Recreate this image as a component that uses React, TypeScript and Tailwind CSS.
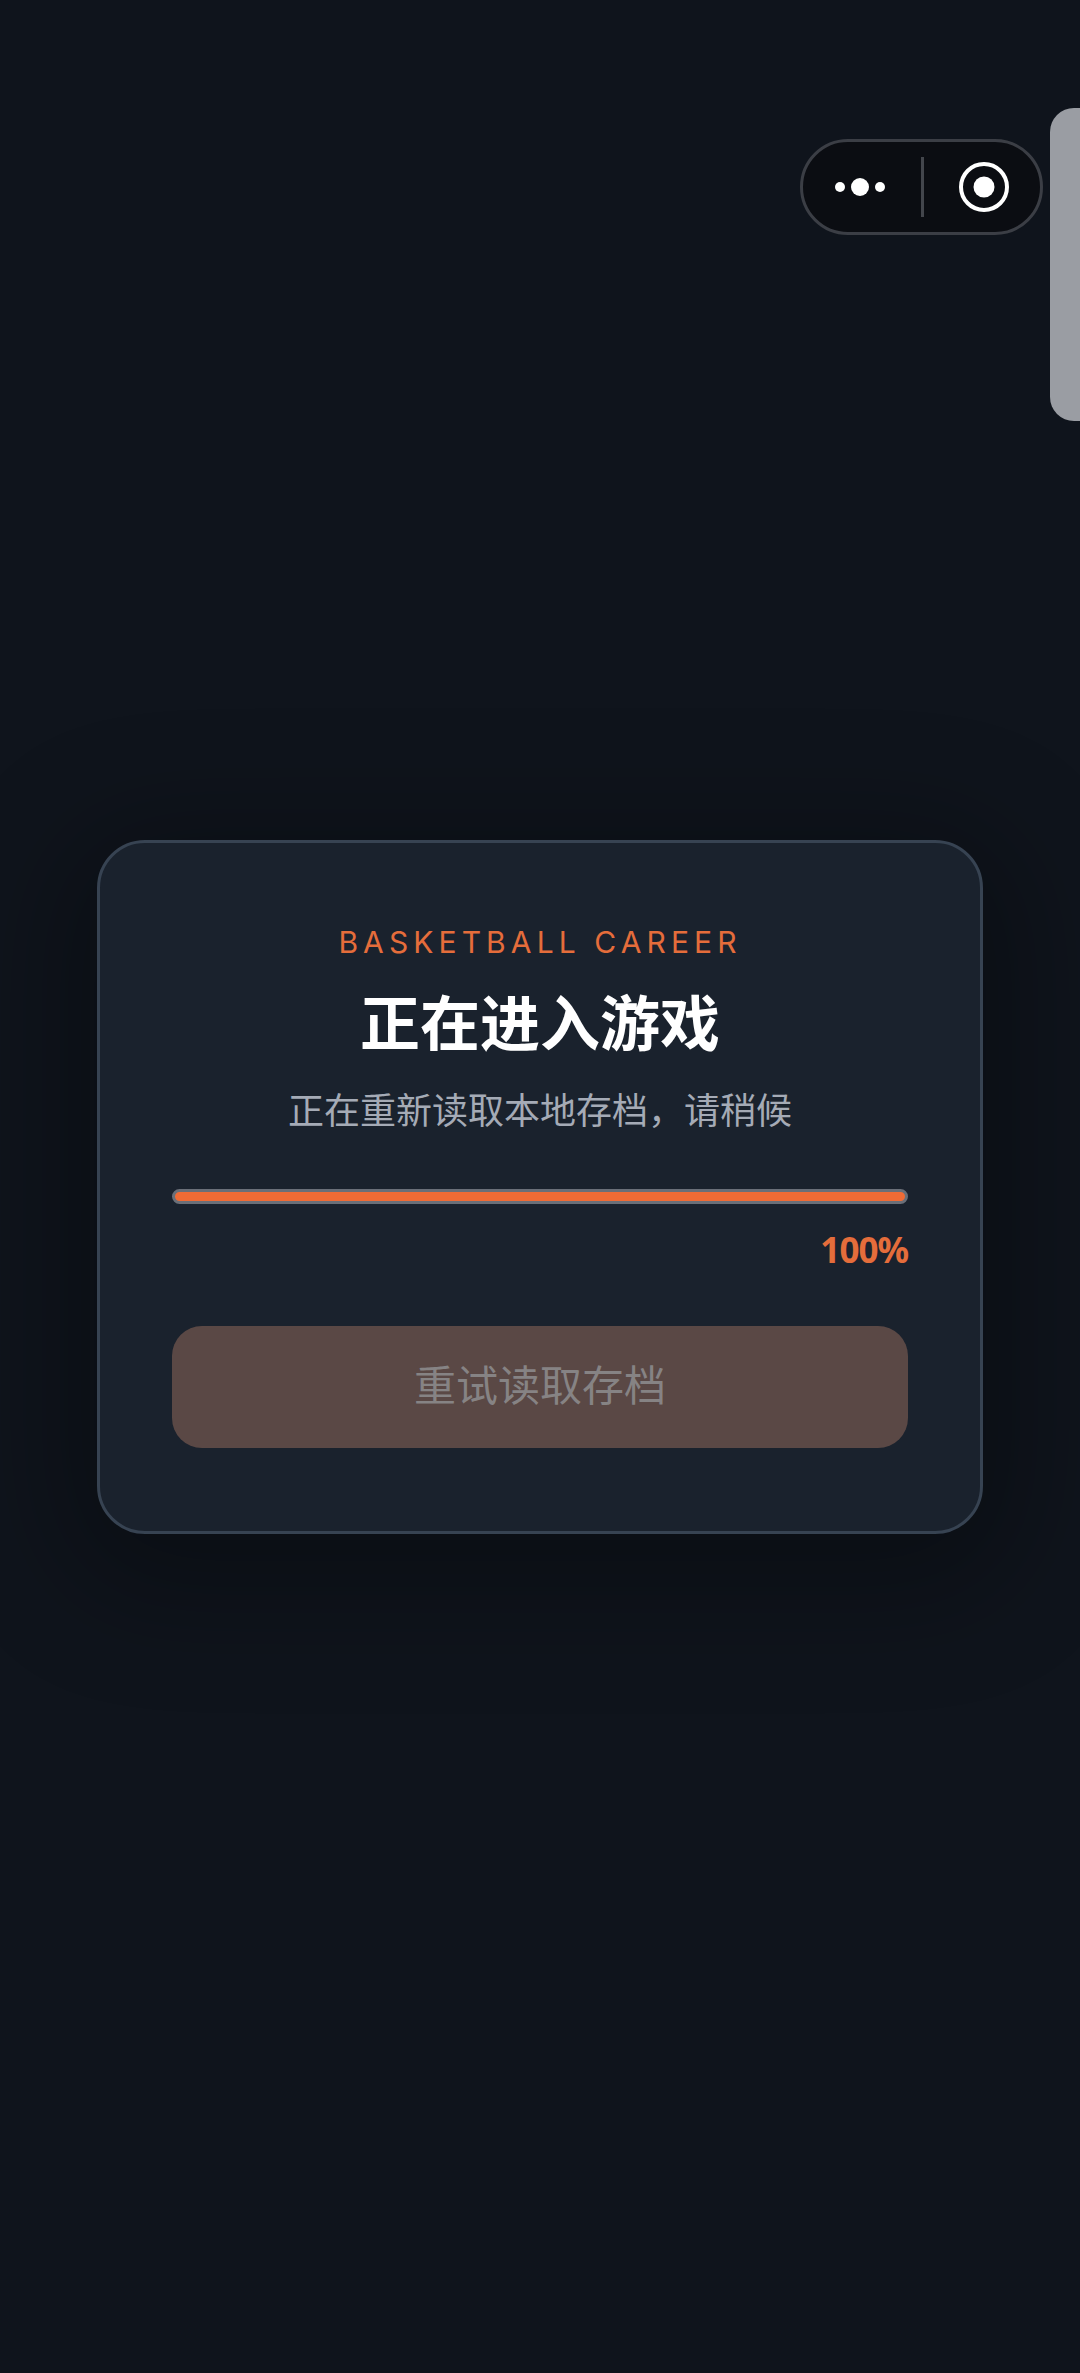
const sans = "font-['Inter','Noto_Sans_CJK_SC',sans-serif]";

function CapsuleMenu() {
  return (
    <div className="absolute left-[800px] top-[139px] flex h-[96px] w-[243px] items-center rounded-full border-[3px] border-[#3b3e45] bg-[#0b0d12]">
      <svg className="ml-[22px] h-[20px] w-[70px]" viewBox="0 0 70 20" fill="#ffffff">
        <circle cx="15" cy="10" r="5" />
        <circle cx="35" cy="10" r="9" />
        <circle cx="55" cy="10" r="5" />
      </svg>
      <div className="ml-[26px] h-[60px] w-[3px] bg-[#43464c]" />
      <svg className="ml-[35px] h-[50px] w-[50px]" viewBox="0 0 50 50" fill="none">
        <circle cx="25" cy="25" r="23" stroke="#ffffff" strokeWidth="4" />
        <circle cx="25" cy="25" r="10.5" fill="#ffffff" />
      </svg>
    </div>
  );
}

export default function App() {
  return (
    <div className={`relative flex h-[2373px] w-[1080px] items-center justify-center overflow-hidden bg-[#0f141c] ${sans}`}>
      <CapsuleMenu />
      <div className="absolute right-0 top-[108px] h-[313px] w-[30px] rounded-l-[24px] bg-[#9a9da3]" />

      <div className="flex h-[694px] w-[886px] flex-col rounded-[48px] border-[3px] border-[#374352] bg-[#1a222d] px-[72px] pt-[81px] shadow-[0_24px_120px_30px_rgba(0,0,0,0.3)]">
        <p className="text-center text-[30px] leading-[36px] tracking-[0.17em] text-[#e56d3b]">BASKETBALL CAREER</p>
        <h1 className="mt-[28px] text-center text-[60px] font-bold leading-[72px] text-white">正在进入游戏</h1>
        <p className="mt-[27px] text-center text-[36px] leading-[48px] text-[#a5abb6]">{"正在重新读取本地存档\uFF0C请稍候"}</p>

        <div className="mt-[54px] h-[15px] rounded-full border-[3px] border-[#6a6f78] bg-[#f06b35]" />
        <p className="mt-[24px] text-right font-['Noto_Sans',sans-serif] text-[35px] font-bold leading-[44px] tracking-[-1px] text-[#e56d3b]">100%</p>

        <button className="mt-[54px] h-[122px] rounded-[30px] bg-[#5a4845] pb-[2px] text-[42px] text-[#868384]">重试读取存档</button>
      </div>
    </div>
  );
}
